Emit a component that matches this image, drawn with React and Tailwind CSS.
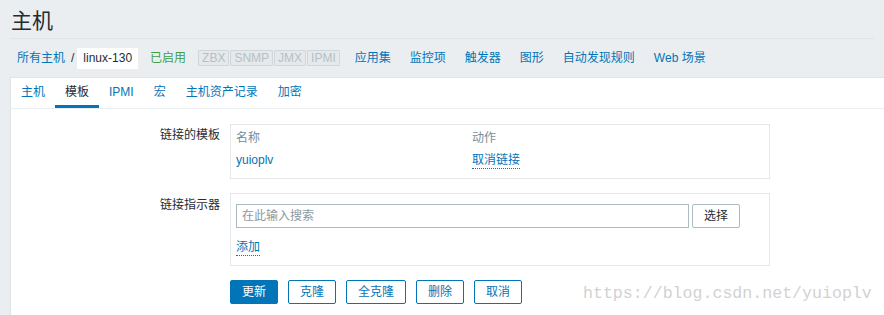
import React from "react"

const tabs = ["主机", "模板", "IPMI", "宏", "主机资产记录", "加密"]
const links = ["应用集", "监控项", "触发器", "图形", "自动发现规则", "Web 场景"]
const tags = ["ZBX", "SNMP", "JMX", "IPMI"]
const buttons = ["克隆", "全克隆", "删除", "取消"]

export default function App() {
  return (
    <div
      className="relative w-[884px] h-[315px] overflow-hidden bg-[#ebeef0] text-[12px] text-[#1f2c33] leading-[14px]"
      style={{ fontFamily: '"Liberation Sans", Arial, "Noto Sans CJK SC", sans-serif' }}
    >
      {/* Header */}
      <header className="mx-[10px] h-[39px] border-b border-[#dfe4e7] flex items-center">
        <h1 className="text-[21px] leading-none pl-px pt-[3px]">主机</h1>
      </header>

      {/* Breadcrumb + host navigation */}
      <nav className="h-[38px] pl-[17px] flex items-center">
        <a className="text-[#0275b8]">所有主机</a>
        <span className="ml-[6px] mr-[3px] text-[#1f2c33]">/</span>
        <span className="bg-white h-[21px] px-[6px] flex items-center">linux-130</span>
        <span className="ml-[12px] text-[#429e47]">已启用</span>
        <div className="ml-[12px] flex gap-px">
          {tags.map((t) => (
            <span
              key={t}
              className="h-[16px] px-[3px] flex items-center border border-[#cfd7db] bg-[#e6e9eb] text-[#b4c0c6] rounded-[1px]"
            >
              {t}
            </span>
          ))}
        </div>
        <div className="ml-[15px] flex gap-[19px]">
          {links.map((l) => (
            <a key={l} className="text-[#0275b8]">{l}</a>
          ))}
        </div>
      </nav>

      {/* Main panel */}
      <div className="ml-[10px] h-full bg-white border-l border-t border-[#dfe4e7]">
        <ul className="flex h-[31px] border-b border-[#ebeef0]">
          {tabs.map((t, i) => (
            <li
              key={t}
              className={
                i === 1
                  ? "h-[30px] px-[10px] flex items-center border-b-[3px] border-[#0275b8] text-[#1f2c33]"
                  : "h-[30px] px-[10px] flex items-center border-b-[3px] border-transparent text-[#0275b8]"
              }
            >
              {t}
            </li>
          ))}
        </ul>

        <div className="pt-[15px]">
          {/* Linked templates */}
          <div className="flex">
            <div className="w-[209px] text-right pt-[4px]">链接的模板</div>
            <div className="ml-[10px] w-[540px] h-[55px] border border-[#e3e7ea] px-[5px] pt-[6px]">
              <div className="flex text-[#768d99]">
                <span className="w-[236px]">名称</span>
                <span>动作</span>
              </div>
              <div className="flex mt-[8px]">
                <span className="w-[236px] text-[#0275b8]">yuioplv</span>
                <a className="text-[#0275b8] border-b border-dotted border-[#0275b8] pb-px">取消链接</a>
              </div>
            </div>
          </div>

          {/* Link new templates */}
          <div className="flex mt-[14px]">
            <div className="w-[209px] text-right pt-[5px]">链接指示器</div>
            <div className="ml-[10px] w-[540px] h-[73px] border border-[#e3e7ea] px-[5px] pt-[10px]">
              <div className="flex gap-[3px]">
                <div className="w-[453px] h-[24px] border border-[#acbbc2] px-[5px] flex items-center text-[#8a9aa3]">
                  在此输入搜索
                </div>
                <button className="w-[48px] h-[24px] border border-[#acbbc2] rounded-[2px] bg-white text-[#1f2c33]">
                  选择
                </button>
              </div>
              <a className="inline-block mt-[12px] text-[#0275b8] border-b border-dotted border-[#0275b8] pb-px">添加</a>
            </div>
          </div>

          {/* Actions */}
          <div className="flex gap-[10px] mt-[14px] ml-[219px]">
            <button className="h-[24px] px-[11px] rounded-[2px] bg-[#0275b8] border border-[#0275b8] text-white">
              更新
            </button>
            {buttons.map((b) => (
              <button
                key={b}
                className="h-[24px] px-[11px] rounded-[2px] bg-white border border-[#0275b8] text-[#0275b8]"
              >
                {b}
              </button>
            ))}
          </div>
        </div>
      </div>

      {/* Watermark */}
      <div
        className="absolute left-[583px] top-[284px] text-[16.6px] leading-[20px] text-[#d2d2d2]"
        style={{ fontFamily: '"Liberation Mono", "Courier New", monospace' }}
      >
        https://blog.csdn.net/yuioplv
      </div>
    </div>
  )
}
